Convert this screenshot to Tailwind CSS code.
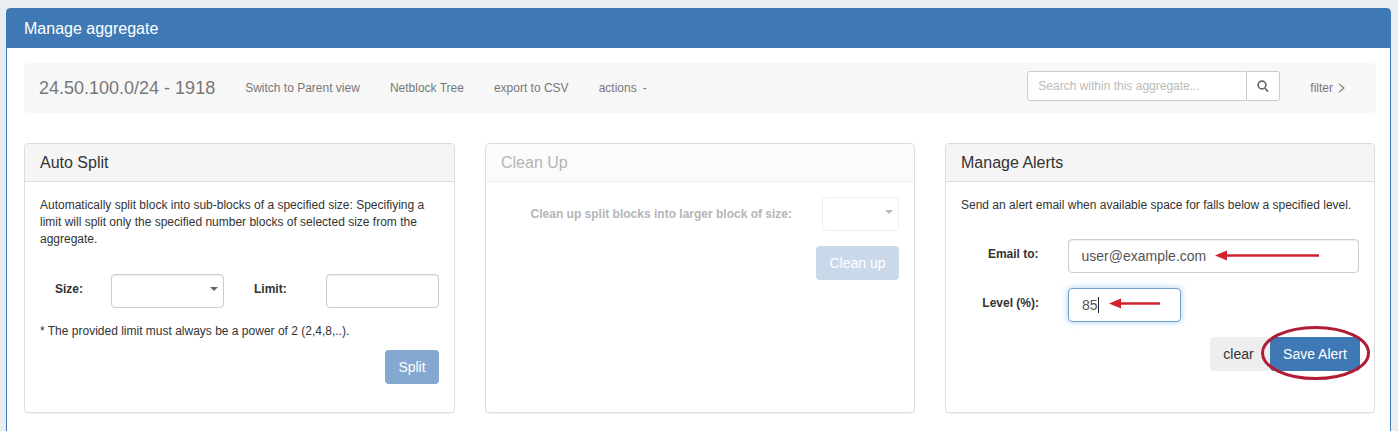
<!DOCTYPE html>
<html lang="en">
<head>
    <meta charset="UTF-8">
    <title>Manage aggregate</title>
    <script src="https://cdn.jsdelivr.net/npm/@tailwindcss/browser@4"></script>
</head>
<body class="bg-[#e9eef2] h-[431px] overflow-hidden font-['Liberation_Sans',Arial,sans-serif] text-[#333]">
    <div class="ml-[6px] mr-[7px] mt-[8px] h-[440px] bg-white border border-[#3f79b5] rounded-t-[4px]">
        <div class="h-[39px] bg-[#3f79b5] text-white text-[16px] pl-[17px] flex items-center">Manage aggregate</div>

        <div class="ml-[17px] mt-[15px] w-[1352px] h-[50px] bg-[#f7f7f7] rounded-[4px] flex items-center pl-[15px] pr-[31px] text-[#777] text-[12px]">
            <span class="text-[18px] mr-[30px]">24.50.100.0/24 - 1918</span>
            <a class="mr-[30px]">Switch to Parent view</a>
            <a class="mr-[30px]">Netblock Tree</a>
            <a class="mr-[30px]">export to CSV</a>
            <a>actions<span class="ml-[6px]">-</span></a>
            <div class="ml-auto flex h-[30px] -mt-[4px]">
                <input placeholder="Search within this aggregate..." class="w-[220px] bg-white border border-[#ccc] rounded-l-[3px] px-[10px] text-[12px] placeholder:text-[#bbb]">
                <button class="w-[33px] bg-white border border-l-0 border-[#ccc] rounded-r-[3px] flex items-center justify-center">
                    <svg width="12" height="13" viewBox="0 0 12 13" fill="none" stroke="#666" stroke-width="1.6"><circle cx="5" cy="5" r="3.9"/><path d="M7.8 8l3.2 3.6"/></svg>
                </button>
            </div>
            <a class="ml-[30px] flex items-center gap-[5px]">filter
                <svg width="7" height="10" viewBox="0 0 7 10" fill="none" stroke="#777" stroke-width="1.1"><path d="M1 .8l5 4.2-5 4.2"/></svg>
            </a>
        </div>

        <div class="ml-[17px] mt-[30px] grid grid-cols-[431px_430px_430px] gap-x-[30px]">
            <section class="h-[270px] border border-[#ddd] rounded-[4px] shadow-[0_1px_1px_rgba(0,0,0,0.05)]">
                <h3 class="h-[38px] bg-[#f5f5f5] border-b border-[#ddd] rounded-t-[4px] px-[15px] flex items-center text-[16px]">Auto Split</h3>
                <div class="px-[15px] pt-[15px] text-[12px] leading-[17px]">
                    <p>Automatically split block into sub-blocks of a specified size: Specifiying a limit will split only the specified number blocks of selected size from the aggregate.</p>
                    <div class="mt-[26px] flex items-start font-bold">
                        <label class="w-[71px] pl-[15px] pt-[7px]">Size:</label>
                        <div class="relative w-[113px] h-[34px] border border-[#ccc] rounded-[4px] shadow-[inset_0_1px_1px_rgba(0,0,0,0.075)]">
                            <span class="absolute right-[5px] top-[12px] border-x-[4px] border-t-[4px] border-x-transparent border-t-[#666]"></span>
                        </div>
                        <label class="w-[102px] pl-[30px] pt-[7px]">Limit:</label>
                        <input class="w-[113px] h-[34px] border border-[#ccc] rounded-[4px] shadow-[inset_0_1px_1px_rgba(0,0,0,0.075)]">
                    </div>
                    <p class="mt-[15px]">* The provided limit must always be a power of 2 (2,4,8,..).</p>
                    <div class="mt-[10px] flex justify-end">
                        <button class="w-[54px] h-[34px] bg-[#84a8d0] rounded-[4px] text-white text-[14px]">Split</button>
                    </div>
                </div>
            </section>

            <section class="h-[270px] border border-[#ddd] rounded-[4px] shadow-[0_1px_1px_rgba(0,0,0,0.05)]">
                <h3 class="h-[38px] bg-[#fbfbfb] border-b border-[#eee] rounded-t-[4px] px-[15px] flex items-center text-[16px] text-[#b5b5b5]">Clean Up</h3>
                <div class="px-[15px] pt-[15px] text-[12px] font-bold text-[#b5b5b5]">
                    <div class="flex justify-end items-center">
                        <label class="mr-[30px]">Clean up split blocks into larger block of size:</label>
                        <div class="relative w-[77px] h-[34px] border border-[#eee] rounded-[4px]">
                            <span class="absolute right-[5px] top-[12px] border-x-[4px] border-t-[4px] border-x-transparent border-t-[#bbb]"></span>
                        </div>
                    </div>
                    <div class="mt-[15px] flex justify-end">
                        <button class="w-[83px] h-[34px] bg-[#c9d9ea] rounded-[4px] text-white text-[14px] font-normal">Clean up</button>
                    </div>
                </div>
            </section>

            <section class="h-[270px] border border-[#ddd] rounded-[4px] shadow-[0_1px_1px_rgba(0,0,0,0.05)]">
                <h3 class="h-[38px] bg-[#f5f5f5] border-b border-[#ddd] rounded-t-[4px] px-[15px] flex items-center text-[16px]">Manage Alerts</h3>
                <div class="relative px-[15px] pt-[15px] text-[12px] leading-[17px]">
                    <p>Send an alert email when available space for falls below a specified level.</p>
                    <div class="mt-[25px] flex items-start">
                        <label class="w-[78px] text-right font-bold pt-[7px]">Email to:</label>
                        <input value="user@example.com" class="ml-[29px] w-[293px] h-[34px] border border-[#ccc] rounded-[4px] px-[13px] text-[14px] text-[#555] shadow-[inset_0_1px_1px_rgba(0,0,0,0.075)]">
                    </div>
                    <div class="mt-[15px] flex items-start">
                        <label class="w-[78px] text-right font-bold pt-[7px]">Level (%):</label>
                        <div class="ml-[29px] w-[113px] h-[34px] border border-[#6f9fca] rounded-[4px] px-[13px] text-[14px] leading-[32px] text-[#555] shadow-[0_0_6px_rgba(102,175,233,0.6)]">85<span class="inline-block w-px h-[16px] bg-[#222] align-[-3px]"></span></div>
                    </div>
                    <div class="mt-[15px] -mr-[1px] flex justify-end">
                        <button class="w-[60px] h-[34px] pr-[3px] bg-[#eee] rounded-l-[4px] text-[14px]">clear</button>
                        <button class="w-[90px] h-[34px] bg-[#3f79b5] rounded-[4px] text-white text-[14px]">Save Alert</button>
                    </div>

                    <!-- annotations drawn over the screenshot -->
                    <svg class="absolute left-0 top-0 overflow-visible pointer-events-none" width="430" height="230" fill="none">
                        <path d="M272 73.5h101" stroke="#d0222c" stroke-width="2.5"/>
                        <path d="M269 73.5l12-5v10z" fill="#d0222c"/>
                        <path d="M166 121.5h48" stroke="#d0222c" stroke-width="2.5"/>
                        <path d="M163 121.5l12-5v10z" fill="#d0222c"/>
                        <ellipse cx="369.5" cy="171" rx="53" ry="25.5" stroke="#b01c35" stroke-width="3"/>
                    </svg>
                </div>
            </section>
        </div>
    </div>
</body>
</html>
